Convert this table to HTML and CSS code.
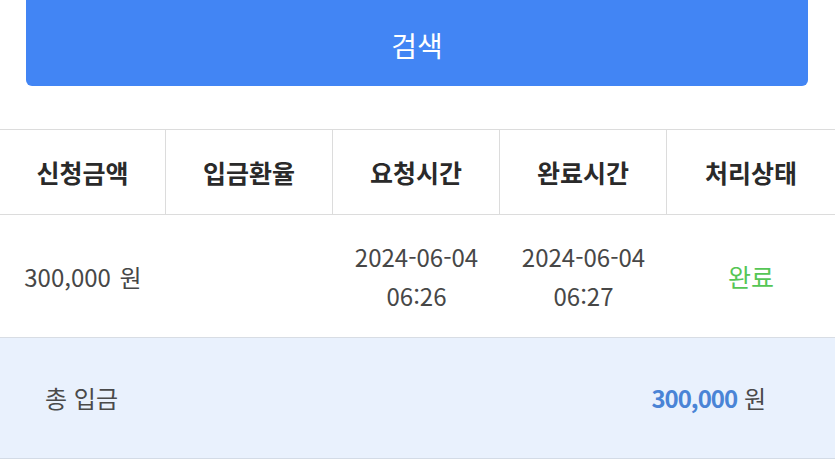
FILE: index.html
```html
<!DOCTYPE html>
<html lang="ko">
<head>
<meta charset="utf-8">
<link rel="stylesheet" href="styles.css">
</head>
<body>
<div class="top">
  <button class="search-btn">검색</button>
</div>
<div class="table">
  <div class="row head">
    <div class="cell">신청금액</div>
    <div class="cell">입금환율</div>
    <div class="cell">요청시간</div>
    <div class="cell">완료시간</div>
    <div class="cell">처리상태</div>
  </div>
  <div class="row body">
    <div class="cell">300,000 원</div>
    <div class="cell"></div>
    <div class="cell">2024-06-04<br>06:26</div>
    <div class="cell">2024-06-04<br>06:27</div>
    <div class="cell done">완료</div>
  </div>
</div>
<div class="total">
  <span class="total-label">총 입금</span>
  <span class="total-value"><b>300,000</b> 원</span>
</div>
</body>
</html>
```
FILE: styles.css
```css
* { box-sizing: border-box; }
html, body {
  margin: 0;
  padding: 0;
  background: #fff;
  font-family: "Noto Sans CJK KR", "Noto Sans", sans-serif;
}
.top {
  padding: 0 27px 0 26px;
  height: 129px;
}
.search-btn {
  display: block;
  width: 100%;
  height: 86px;
  border: none;
  border-radius: 0 0 6px 6px;
  background: #4285f4;
  color: #fff;
  font-family: inherit;
  font-size: 28px;
  padding: 4px 0 0;
}
.table {
  border-top: 1px solid #dcdcdc;
}
.row {
  display: grid;
  grid-template-columns: 166px 167px 167px 167px 168px;
  border-bottom: 1px solid #dcdcdc;
}
.cell {
  display: flex;
  align-items: center;
  justify-content: center;
  text-align: center;
  border-right: 1px solid #dcdcdc;
}
.row .cell:last-child { border-right: none; }
.head .cell {
  height: 84px;
  font-size: 25px;
  font-weight: 700;
  color: #2a2a2a;
}
.body { border-bottom-color: #d8dde4; }
.body .cell {
  border-right: none;
  height: 122px;
  font-size: 24px;
  line-height: 39px;
  color: #474747;
}
.body .cell:first-child { word-spacing: 2px; }
.body .done {
  color: #55c655;
  font-size: 25px;
}
.total {
  display: flex;
  align-items: center;
  justify-content: space-between;
  height: 121px;
  padding: 0 69px 2px 45px;
  background: #e9f1fd;
  border-bottom: 1px solid #d3dbe6;
  font-size: 24px;
  color: #4a4a4a;
}
.total-value b {
  color: #4a84d6;
  font-weight: 700;
  letter-spacing: -1px;
}
```
